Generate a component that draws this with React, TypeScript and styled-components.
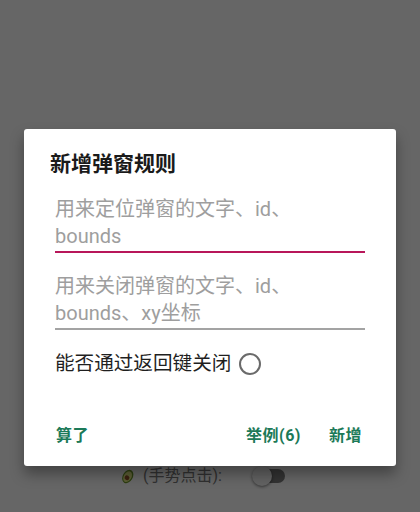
import * as React from 'react';
import styled, { createGlobalStyle } from 'styled-components';

const GlobalStyle = createGlobalStyle`
    html, body {
        margin: 0;
        padding: 0;
        background: #ffffff;
    }
    body {
        font-family: Roboto, "Noto Sans CJK SC", "Noto Sans", sans-serif;
    }
`;

const Screen = styled.div`
    position: relative;
    width: 420px;
    height: 512px;
    overflow: hidden;
    background: #ffffff;
`;

const BehindPage = styled.div`
    display: flex;
    flex-direction: column;
    padding-top: 467px;
`;

const SettingRow = styled.div`
    display: flex;
    align-items: center;
    padding-left: 121px;
    height: 18px;
`;

const SettingLabel = styled.span`
    margin-left: 8px;
    font-size: 16px;
    line-height: 18px;
    color: #7a7a7a;
    width: 112px;
`;

const Toggle = styled.div`
    position: relative;
    width: 30px;
    height: 14px;
    border-radius: 7px;
    background: #7f7f7f;
`;

const ToggleThumb = styled.div`
    position: absolute;
    left: -3px;
    top: -3px;
    width: 20px;
    height: 20px;
    border-radius: 50%;
    background: #f4f4f4;
    box-shadow: 0 1px 3px rgba(0, 0, 0, 0.5);
`;

const Overlay = styled.div`
    position: absolute;
    inset: 0;
    display: flex;
    flex-direction: column;
    align-items: flex-start;
    padding: 129px 0 0 24px;
    background: rgba(0, 0, 0, 0.6);
`;

const Dialog = styled.div`
    width: 372px;
    display: flex;
    flex-direction: column;
    background: #ffffff;
    border-radius: 3px;
    box-shadow: 0 8px 14px rgba(0, 0, 0, 0.35);
`;

const Title = styled.h2`
    margin: 0;
    padding: 21px 26px 0 26px;
    font-size: 21px;
    line-height: 29px;
    font-weight: 700;
    color: #1a1a1a;
`;

const Field = styled.div<{ focused?: boolean }>`
    margin: ${(p) => (p.focused ? '17px' : '20px')} 31px 0 31px;
    padding-bottom: 1px;
    font-size: 20px;
    line-height: 27px;
    color: #9e9e9e;
    border-bottom: 2px solid ${(p) => (p.focused ? '#b8175a' : '#a3a3a3')};
`;

const CheckRow = styled.label`
    display: flex;
    align-items: center;
    margin: 20px 31px 0 31px;
    font-size: 19.6px;
    line-height: 27px;
    color: #1f1f1f;
`;

const Radio = styled.span`
    display: inline-block;
    box-sizing: border-box;
    width: 22px;
    height: 22px;
    margin-left: 8px;
    border: 2px solid #6a6a6a;
    border-radius: 50%;
`;

const Actions = styled.div`
    display: flex;
    align-items: center;
    margin-top: 39px;
    padding: 0 26px 14px 24px;
`;

const Spacer = styled.div`
    flex: 1;
`;

const TextButton = styled.button<{ last?: boolean }>`
    border: none;
    background: none;
    padding: 0 8px;
    margin-left: ${(p) => (p.last ? '12px' : '0')};
    height: 36px;
    font-family: inherit;
    font-size: 16px;
    font-weight: 700;
    letter-spacing: 0.5px;
    color: #1c7a58;
    cursor: pointer;
`;

const Avocado = () => (
    <svg width="14" height="18" viewBox="0 0 14 18">
        <g transform="rotate(30 7 9)">
            <ellipse cx="7" cy="9.5" rx="5" ry="7.2" fill="#6f9a2a" />
            <ellipse cx="7" cy="9.8" rx="3.8" ry="5.8" fill="#e6ec86" />
            <circle cx="7" cy="11" r="2.4" fill="#94532a" />
        </g>
    </svg>
);

export default function App() {
    return (
        <Screen>
            <GlobalStyle />
            <BehindPage>
                <SettingRow>
                    <Avocado />
                    <SettingLabel>(手势点击):</SettingLabel>
                    <Toggle>
                        <ToggleThumb />
                    </Toggle>
                </SettingRow>
            </BehindPage>
            <Overlay>
                <Dialog>
                    <Title>新增弹窗规则</Title>
                    <Field focused>
                        用来定位弹窗的文字、id、
                        <br />
                        bounds
                    </Field>
                    <Field>
                        用来关闭弹窗的文字、id、
                        <br />
                        bounds、xy坐标
                    </Field>
                    <CheckRow>
                        能否通过返回键关闭
                        <Radio />
                    </CheckRow>
                    <Actions>
                        <TextButton>算了</TextButton>
                        <Spacer />
                        <TextButton>举例(6)</TextButton>
                        <TextButton last>新增</TextButton>
                    </Actions>
                </Dialog>
            </Overlay>
        </Screen>
    );
}
